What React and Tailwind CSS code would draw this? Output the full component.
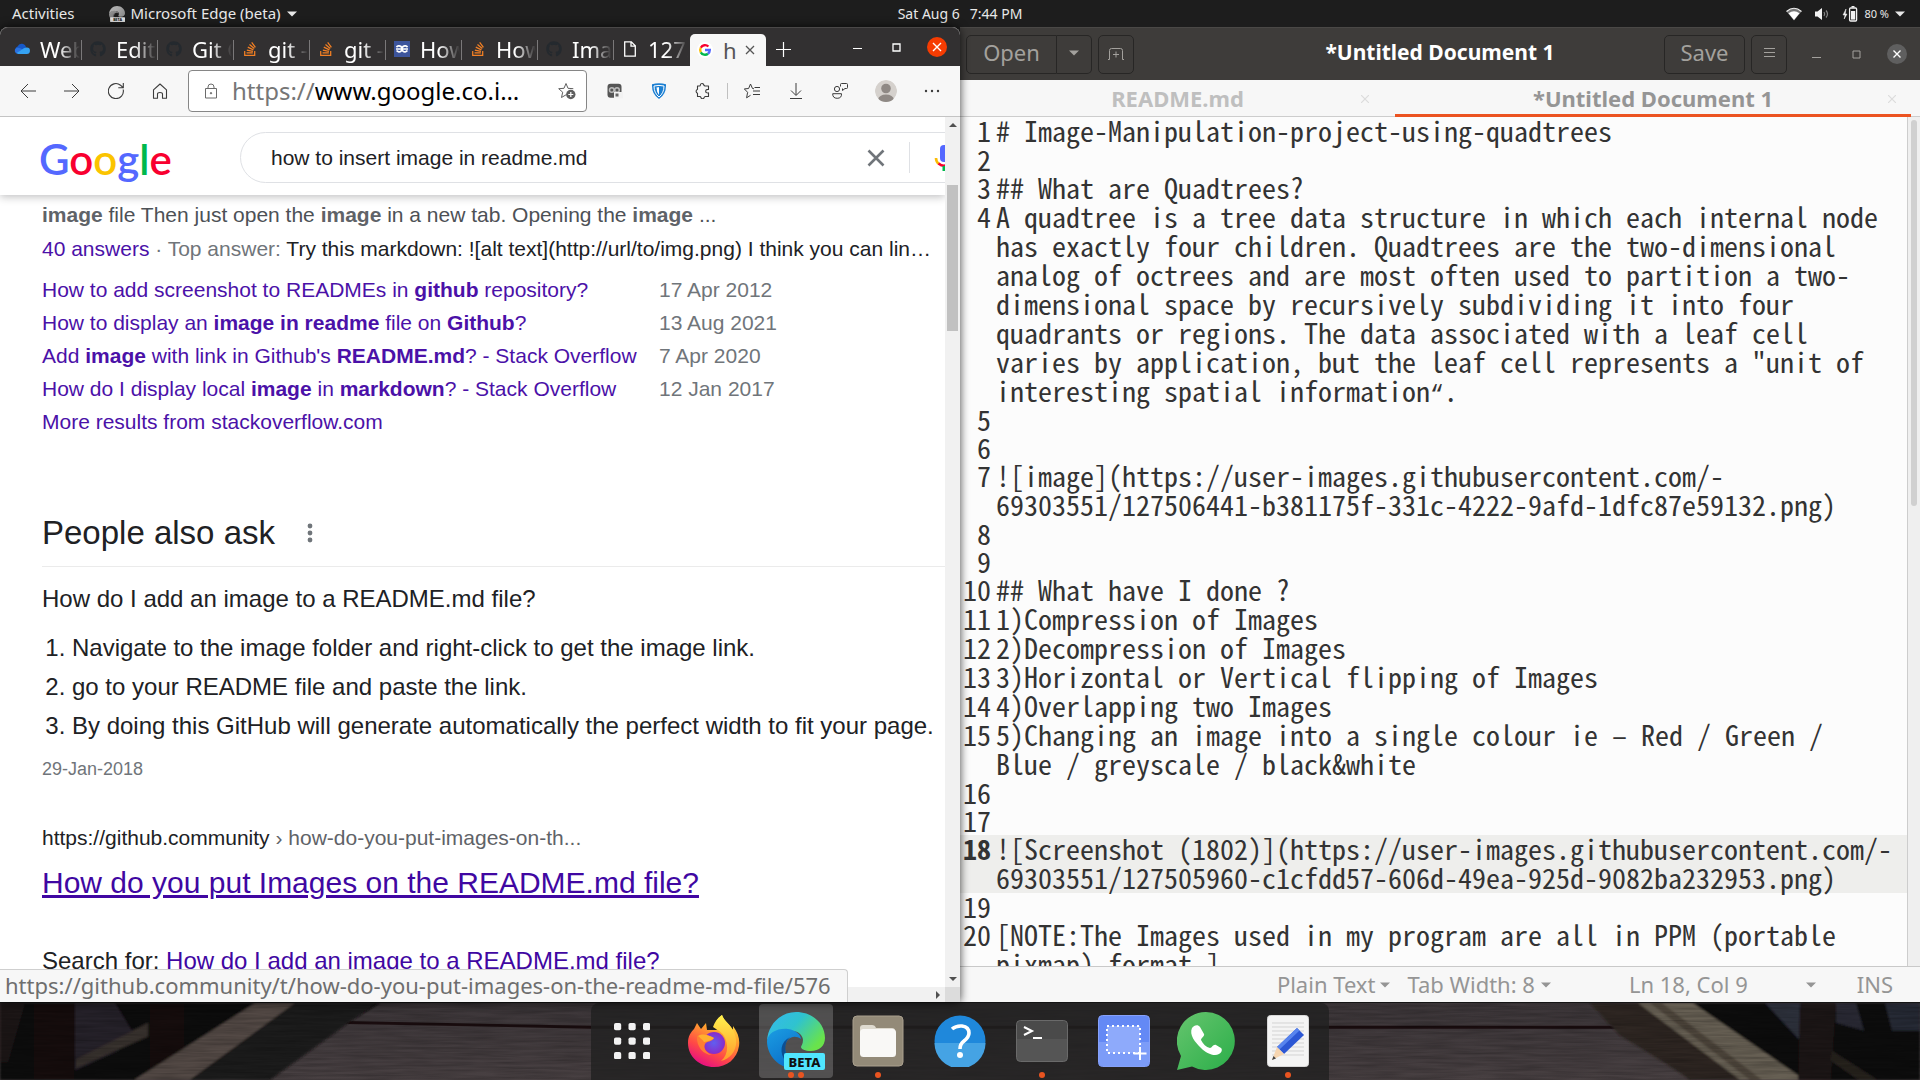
import React from "react";
import { FaGithub, FaStackOverflow } from "react-icons/fa";

const UI = "font-['Noto_Sans',sans-serif]";

/* ---------- small shared drawings ---------- */

function Caret({ className = "" }) {
  return (
    <svg viewBox="0 0 10 6" className={`w-[10px] h-[6px] shrink-0 ${className}`} fill="currentColor" aria-hidden="true">
      <path d="M0 .5h10L5 5.5z" />
    </svg>
  );
}

function Line({ children, size = "size-4", sw = 1, className = "", box = 16 }) {
  return (
    <svg viewBox={`0 0 ${box} ${box}`} className={`${size} shrink-0 ${className}`} fill="none" stroke="currentColor" strokeWidth={sw} aria-hidden="true">
      {children}
    </svg>
  );
}

function GoogleG({ className = "" }) {
  return (
    <svg viewBox="0 0 16 16" className={className} aria-hidden="true">
      <circle cx="8" cy="8" r="8" fill="#fff" />
      <g fill="none" strokeWidth="2.4">
        <path d="M11.4 4.5A4.8 4.8 0 0 0 3.8 5.7" stroke="#f8002f" />
        <path d="M3.8 5.7a4.8 4.8 0 0 0 0 4.6" stroke="#fbbc05" />
        <path d="M3.8 10.3a4.8 4.8 0 0 0 7.2 1.4" stroke="#00b84c" />
        <path d="M11 11.7A4.8 4.8 0 0 0 12.8 8H8" stroke="#5468ff" />
      </g>
    </svg>
  );
}

function Cloud() {
  return (
    <svg viewBox="0 0 16 16" className="size-4 shrink-0" aria-hidden="true">
      <path d="M3 11a3 3 0 0 1 .6-5.6A4.4 4.4 0 0 1 12 6.6L6 11z" fill="#1658c8" />
      <path d="M4 13a3.2 3.2 0 0 1-1.6-6c2-.8 4 .1 6 1.400l4 4.600z" fill="#2a72e0" />
      <path d="M4 13h8.600a3.200 3.200 0 0 0 .3-6.400C10 6 8 9.500 3 11.500z" fill="#35a2f2" />
    </svg>
  );
}

function Gfg() {
  return (
    <svg viewBox="0 0 16 16" className="size-4 shrink-0" aria-hidden="true">
      <rect width="16" height="16" fill="#3d559c" />
      <g fill="none" stroke="#fff" strokeWidth="1.700">
        <path d="M2.500 6.200A3 3 0 1 1 2.600 9.600M2 8h5.500" />
        <path d="M13.500 6.200A3 3 0 1 0 13.400 9.600M14 8H8.500" />
      </g>
    </svg>
  );
}

function Page() {
  return (
    <Line sw={1.300} className="text-white">
      <path d="M2.700 .8h6.600l4 4v10.400H2.700zM9 .8v4.400h4.300" />
    </Line>
  );
}

function EdgeMark({ gray = false, className = "" }) {
  const id = gray ? "eg" : "ec";
  return (
    <svg viewBox="0 0 58 58" className={className} aria-hidden="true">
      <defs>
        <linearGradient id={`${id}a`} x1="0" y1="0" x2="1" y2=".6">
          <stop offset="0" stopColor={gray ? "#b5b5b5" : "#35b9ee"} />
          <stop offset=".5" stopColor={gray ? "#aaa" : "#2fc3cf"} />
          <stop offset="1" stopColor={gray ? "#8e8e8e" : "#69e34b"} />
        </linearGradient>
        <linearGradient id={`${id}b`} x1="0" y1="0" x2=".6" y2="1">
          <stop offset="0" stopColor={gray ? "#999" : "#1b9de2"} />
          <stop offset="1" stopColor={gray ? "#666" : "#0a6cc8"} />
        </linearGradient>
      </defs>
      <path d="M0 29C1 12 14 0 29 0c17 0 29 12 29 26 0 8-6 13-14 13-6 0-10-2-10-4 0-1 2-3 2-7 0-4-4-9-11-9C13 19 2 21 0 29z" fill={`url(#${id}a)`} />
      <path d="M0 29c1-8 10-13 21-12 8 1 13 6 13 10-8-6-17 1-16 10 1 10 10 18 21 18-4 2-8 3-12 2C12 56 0 44 0 29z" fill={`url(#${id}b)`} />
      <path d="M23 25c-5 4-6 12-3 19 3 6 8 11 17 12-7 1-14-1-18-6-7-9-6-20 4-25z" fill={gray ? "#555" : "#0c4f93"} />
      <rect x={gray ? 4 : 17} y="41" width={gray ? 54 : 41} height="17" rx="2" fill={gray ? "#ddd" : "#50e6ff"} />
      <text x={gray ? 31 : 37.500} y="54.500" textAnchor="middle" fontFamily="Noto Sans" fontWeight="800" fontSize="13" fill="#111">BETA</text>
    </svg>
  );
}

/* ---------- top panel ---------- */

function TopPanel() {
  return (
    <header className={`h-[27px] shrink-0 bg-[#1d1d1d] text-[#e8e8e8] text-[15px] leading-[27px] grid grid-cols-[1fr_auto_1fr] ${UI}`}>
      <div className="flex items-center pl-3">
        <button>Activities</button>
        <button className="flex items-center gap-[6px] ml-[34px]">
          <EdgeMark gray className="size-4" />
          Microsoft Edge (beta)
          <Caret />
        </button>
      </div>
      <button className="flex gap-[10px] text-[14px]"><span>Sat Aug 6</span><span>7:44 PM</span></button>
      <button className="flex items-center justify-end pr-[15px]" aria-label="System menu">
        <svg viewBox="0 0 16 14" className="w-4 h-[14px]" aria-hidden="true">
          <path d="M.5 4.500Q8-2 15.500 4.500L8 13.500z" fill="#777" />
          <path d="M.5 4.500Q8-2 15.500 4.500" fill="none" stroke="#f2f2f2" strokeWidth="1.200" />
          <path d="M2.500 6.300Q8 2 13.500 6.300L8 13z" fill="#fff" />
        </svg>
        <svg viewBox="0 0 16 14" className="w-4 h-[14px] ml-3" aria-hidden="true">
          <path d="M1 4.500h2.500L8 1v12L3.500 9.500H1z" fill="#f2f2f2" />
          <path d="M10 5q1.500 2 0 4M12 3.500q3 3.500 0 7" fill="none" stroke="#888" strokeWidth="1.200" />
        </svg>
        <svg viewBox="0 0 16 16" className="size-4 ml-3" aria-hidden="true">
          <path d="M4 3 1 9h2l-.8 4L5 8H3.200z" fill="#f2f2f2" stroke="#f2f2f2" strokeWidth=".5" />
          <path d="M9.500 0h3v1.500h-3z" fill="#f2f2f2" />
          <rect x="7.600" y="2" width="7" height="13" rx="1" fill="none" stroke="#f2f2f2" strokeWidth="1.300" />
          <rect x="9" y="5" width="4.200" height="8.600" fill="#f2f2f2" />
        </svg>
        <span className="text-[11px] ml-[6px] mr-[6px]">80 %</span>
        <Caret />
      </button>
    </header>
  );
}

/* ---------- browser window ---------- */

const gh = <FaGithub className="size-4 shrink-0 text-[#24292e]" />;
const so = <FaStackOverflow className="size-4 shrink-0 text-[#f48024]" />;

const TABS = [
  { icon: <Cloud />, label: "Web" },
  { icon: gh, label: "Editi" },
  { icon: gh, label: "Git C" },
  { icon: so, label: "git - " },
  { icon: so, label: "git - " },
  { icon: <Gfg />, label: "How" },
  { icon: so, label: "How" },
  { icon: gh, label: "Imag" },
  { icon: <Page />, label: "127." },
];

function BrowserTabs() {
  return (
    <div className={`flex h-[39px] shrink-0 bg-[#323031] border-t border-[#4a4848] rounded-t-[8px] text-white text-[22px] ${UI}`}>
      <div className="flex pl-[6px] min-w-0" role="tablist">
        {TABS.map((t, i) => (
          <button key={i} role="tab" aria-selected="false" className="flex items-center w-[76px] pl-2 gap-[10px] overflow-hidden relative pt-1">
            {t.icon}
            <span className="flex-1 min-w-0 text-left overflow-hidden whitespace-pre leading-[30px] [mask-image:linear-gradient(to_right,#000_45%,transparent_95%)]">{t.label}</span>
            {i < 8 && <span className="w-px h-5 bg-[#7a7879] absolute right-0 top-[12px]" />}
          </button>
        ))}
        <div role="tab" aria-selected="true" className="flex items-center w-[76px] mt-[6px] pl-[7px] bg-[#f7f7f7] text-[#555] rounded-t-[5px]">
          <GoogleG className="size-4 shrink-0" />
          <span className="ml-[10px] w-[14px] overflow-hidden leading-[30px]">h</span>
          <button aria-label="Close tab" className="ml-2">
            <Line size="size-[10px]" box={10} sw={1.300}><path d="M1 1l8 8M9 1l-8 8" /></Line>
          </button>
        </div>
      </div>
      <button aria-label="New tab" className="ml-[10px] mt-1">
        <Line size="size-[15px]" box={15} sw={1.200}><path d="M7.500 0v15M0 7.500h15" /></Line>
      </button>
      <div className="ml-auto flex items-center gap-[30px] pr-[13px]">
        <button aria-label="Minimise"><Line size="size-[9px]" box={9}><path d="M0 5.500h9" /></Line></button>
        <button aria-label="Maximise"><Line size="size-[9px]" box={9} sw={2}><path d="M1 1h7v7H1z" strokeWidth="1.300" /></Line></button>
        <button aria-label="Close" className="-ml-[4px] size-5 rounded-full bg-[#f63c02] flex items-center justify-center">
          <Line size="size-[10px]" box={10} sw={1.400}><path d="M1 1l8 8M9 1l-8 8" /></Line>
        </button>
      </div>
    </div>
  );
}

function ToolButton({ label, children }) {
  return (
    <button aria-label={label} className="w-11 h-9 flex items-center justify-center shrink-0 text-[#3c3c3c]">
      {children}
    </button>
  );
}

function BrowserToolbar() {
  return (
    <div className={`flex items-center h-[51px] shrink-0 bg-[#f7f7f7] border-b border-[#c4c4c4] pl-[6px] pr-[6px] ${UI}`}>
      <ToolButton label="Back"><Line><path d="M16 8H1M8 1L1 8l7 7" /></Line></ToolButton>
      <ToolButton label="Forward"><Line><path d="M0 8h15M8 1l7 7-7 7" /></Line></ToolButton>
      <ToolButton label="Refresh"><Line sw={1.100}><path d="M15.200 6.500A7.500 7.500 0 1 1 12.500 2.200l2.500 2.300M15.300 0v4.800h-5" /></Line></ToolButton>
      <ToolButton label="Home"><Line sw={1.100}><path d="M1.500 6.800L8 1l6.500 5.800v8.500h-4V11q0-1.500-2.500-1.500T5.500 11v4.300h-4z" strokeLinejoin="round" /></Line></ToolButton>
      <div className="flex items-center flex-1 min-w-0 h-[42px] ml-[6px] mr-[6px] pl-[14px] pr-[10px] bg-white border border-[#868686] rounded-[4px] text-[24px]">
        <Line className="text-[#6b6b6b]"><path d="M2.500 5.500h11v9.500h-11zM5 5.500V4a3 3 0 0 1 6 0v1.500" strokeLinejoin="round" /><circle cx="8" cy="10.200" r=".7" fill="currentColor" /></Line>
        <label htmlFor="address" className="ml-[13px] text-[#767676]">https://</label>
        <input id="address" className="flex-1 min-w-0 bg-transparent text-black outline-none" defaultValue="www.google.co.i…" />
        <button aria-label="Add to favourites" className="text-[#5f5f5f]">
          <svg viewBox="0 0 18 18" className="size-[18px]" aria-hidden="true">
            <path d="M8 1.500l2 4.800 5.300.4M8 1.500L6 6.300l-5.300.4 4 3.500-1.200 5.300L8 12.800" fill="none" stroke="currentColor" />
            <circle cx="12.800" cy="12.500" r="4.700" fill="currentColor" />
            <path d="M12.800 10v5M10.300 12.500h5" stroke="#fff" strokeWidth="1.200" />
          </svg>
        </button>
      </div>
      <ToolButton label="Video extension">
        <svg viewBox="0 0 16 16" className="size-4" aria-hidden="true">
          <rect x=".5" y=".8" width="14" height="14" rx="3" fill="#555" />
          <circle cx="4.800" cy="7" r="2.300" fill="none" stroke="#bbb" strokeWidth="1.500" />
          <circle cx="10" cy="7" r="2.300" fill="none" stroke="#bbb" strokeWidth="1.500" />
          <path d="M7 9h9v6.500H7z" fill="#f2f2f2" />
          <path d="M8.500 10.500h3v3h-3z" fill="#666" />
        </svg>
      </ToolButton>
      <ToolButton label="Shield extension">
        <svg viewBox="0 0 16 16" className="size-4" aria-hidden="true">
          <path d="M1 1.200Q8-.5 15 1.200 15.500 11 8 16 .5 11 1 1.200z" fill="#1c7fd2" />
          <path d="M3 3q5-1.200 10 0 0 7-5 11-5-4-5-11z" fill="none" stroke="#fff" strokeWidth="1" />
          <path d="M5.500 4.500Q8 4 8 4v8Q5.500 9 5.500 4.500z" fill="#fff" />
        </svg>
      </ToolButton>
      <ToolButton label="Extensions"><Line sw={1.100}><path d="M5.300 2.500a1.800 1.800 0 0 1 3.600-.3q.3.800 1.200.8h3.400v3.400q-2.800-.2-2.800 1.800t2.800 1.700v3.600h-3.200q-.9.100-1.100.9a1.700 1.700 0 0 1-3.300 0q-.2-.9-1.100-.9H2.500v-3.200A2.100 2.100 0 0 1 2.200 6.500l.3-.2V3h1.800q1 0 1-.5z" strokeLinejoin="round" /></Line></ToolButton>
      <span className="w-px h-4 bg-[#c0c0c0] mx-[2px]" />
      <ToolButton label="Favourites"><Line><path d="M10 5.800L8.500 5.500 6.500 1 4.600 5.500l-4.300.4 3.300 3.400-1 5.500 3.900-2.500M10.500 4.500H16M9 8h7M9 11.500h7" /></Line></ToolButton>
      <ToolButton label="Downloads"><Line><path d="M8 0v12M3 7.500l5 5 5-5M2 15.500h12" /></Line></ToolButton>
      <ToolButton label="Feedback"><Line><path d="M8.500 3.500v-2Q8.500.5 9.500.5h5q1 0 1 1v3q0 1-1 1h-1.500l-2.500 2V5.500" /><circle cx="5" cy="6" r="2.600" /><path d="M.7 10.700h8.800q.3 4.600-4.300 4.600T.7 10.700z" /></Line></ToolButton>
      <button aria-label="Profile" className="w-12 flex justify-center shrink-0">
        <svg viewBox="0 0 22 22" className="size-[22px] rounded-full" aria-hidden="true">
          <circle cx="11" cy="11" r="11" fill="#d5d1cd" />
          <circle cx="11" cy="8.500" r="4.800" fill="#8f8985" />
          <ellipse cx="11" cy="19.500" rx="7.800" ry="5" fill="#8f8985" />
        </svg>
      </button>
      <ToolButton label="Settings"><Line><g fill="currentColor" stroke="none"><circle cx="2" cy="8" r="1.200" /><circle cx="8" cy="8" r="1.200" /><circle cx="14" cy="8" r="1.200" /></g></Line></ToolButton>
    </div>
  );
}

const LINKS = [
  { text: <>How to add screenshot to READMEs in <b>github</b> repository?</>, date: "17 Apr 2012" },
  { text: <>How to display an <b>image in readme</b> file on <b>Github</b>?</>, date: "13 Aug 2021" },
  { text: <>Add <b>image</b> with link in Github's <b>README.md</b>? - Stack Overflow</>, date: "7 Apr 2020" },
  { text: <>How do I display local <b>image</b> in <b>markdown</b>? - Stack Overflow</>, date: "12 Jan 2017" },
];

function SearchHeader() {
  return (
    <div className="flex h-[78px] shrink-0 bg-white relative z-10 shadow-[0_2px_8px_rgba(32,33,36,0.28)] pt-[15px]">
      <a href="#home" aria-label="Google" className="w-[200px] ml-[39px] shrink-0 font-['Lato',sans-serif] font-semibold text-[42px] leading-[54px] text-[#5468ff]">
        G<span className="text-[#f8002f]">o</span><span className="text-[#fbc400]">o</span>g<span className="text-[#00b84c]">l</span><span className="text-[#f8002f]">e</span>
      </a>
      <form className="flex items-center w-[900px] shrink-0 h-[51px] border border-[#dfe1e5] rounded-full pl-[30px] ml-px">
        <input aria-label="Search" className="w-[596px] text-[21px] text-[#202124] outline-none" defaultValue="how to insert image in readme.md" />
        <button type="button" aria-label="Clear" className="text-[#70757a]">
          <Line size="size-[18px]" box={18} sw={2.600}><path d="M1.500 1.500l15 15M16.500 1.500l-15 15" /></Line>
        </button>
        <span className="w-px h-[31px] bg-[#dfe1e5] ml-6" />
        <button type="button" aria-label="Search by voice" className="ml-6">
          <svg viewBox="0 0 20 26" className="w-5 h-[26px]" aria-hidden="true">
            <rect x="6" y="0" width="8" height="17" rx="4" fill="#5468ff" />
            <path d="M2 13q0 4 3 6" fill="none" stroke="#fbbc05" strokeWidth="2.600" />
            <path d="M4.500 18.500q5.500 4.500 11 0" fill="none" stroke="#f8002f" strokeWidth="2.600" />
            <path d="M10 21v5" stroke="#00b84c" strokeWidth="3" />
          </svg>
        </button>
      </form>
    </div>
  );
}

function SearchPage() {
  return (
    <div className="flex-1 min-w-0 flex flex-col overflow-hidden bg-white text-[#202124] font-['Liberation_Sans',Arial,sans-serif]">
      <SearchHeader />
      <main className="flex-1 min-h-0 overflow-hidden pl-[42px] text-[21px] leading-[33px] whitespace-nowrap">
        <p className="pt-[3px] text-[#4d5156]"><b className="text-[#5f6368]">image</b> file Then just open the <b className="text-[#5f6368]">image</b> in a new tab. Opening the <b className="text-[#5f6368]">image</b> ...</p>
        <p className="pt-px mr-3 overflow-hidden text-ellipsis">
          <a href="#answers" className="text-[#4b11a8]">40 answers</a>
          <span className="text-[#70757a]"> · Top answer: </span>
          Try this markdown: ![alt text](http://url/to/img.png) I think you can link to it
        </p>
        <table className="mt-2 text-left">
          <tbody>
            {LINKS.map((l) => (
              <tr key={l.date}>
                <td className="p-0 w-[617px]"><a href="#result" className="text-[#4b11a8]">{l.text}</a></td>
                <td className="p-0 text-[#70757a]">{l.date}</td>
              </tr>
            ))}
          </tbody>
        </table>
        <a href="#more" className="block text-[#4b11a8]">More results from stackoverflow.com</a>
        <div className="flex items-center mt-[71px] pb-[9px] border-b border-[#ebebeb]">
          <h2 className="text-[33px] leading-[48px]">People also ask</h2>
          <button aria-label="About this result" className="ml-8 text-[#70757a]">
            <svg viewBox="0 0 6 20" className="w-[6px] h-5" fill="currentColor" aria-hidden="true"><circle cx="3" cy="3" r="2.400" /><circle cx="3" cy="10" r="2.400" /><circle cx="3" cy="17" r="2.400" /></svg>
          </button>
        </div>
        <h3 className="text-[24px] mt-[15px] leading-[33px]">How do I add an image to a README.md file?</h3>
        <ol className="mt-[13px] text-[24px] leading-[39px] list-decimal pl-[30px]">
          <li>Navigate to the image folder and right-click to get the image link.</li>
          <li>go to your README file and paste the link.</li>
          <li>By doing this GitHub will generate automatically the perfect width to fit your page.</li>
        </ol>
        <p className="text-[18px] text-[#70757a] mt-2">29-Jan-2018</p>
        <p className="mt-[35px]">https://github.community<span className="text-[#5f6368]"> › how-do-you-put-images-on-th...</span></p>
        <h3 className="mt-[9px] text-[30px] leading-[39px]"><a href="#github" className="text-[#4007a2] underline">How do you put Images on the README.md file?</a></h3>
        <p className="mt-[42px] text-[24px]">Search for: <a href="#search" className="text-[#4007a2]">How do I add an image to a README.md file?</a></p>
      </main>
    </div>
  );
}

function Arrow({ d }) {
  return <svg viewBox="0 0 8 8" className="size-2" fill="#505050" aria-hidden="true"><path d={d} /></svg>;
}

function Browser() {
  return (
    <section className="flex flex-col min-w-0 min-h-0 relative z-10 shadow-[0_0_10px_rgba(0,0,0,0.75)] bg-white rounded-t-[8px]">
      <BrowserTabs />
      <BrowserToolbar />
      <div className="flex-1 min-h-0 flex relative">
        <div className="flex-1 min-w-0 flex flex-col">
          <div className="flex-1 min-h-0 flex"><SearchPage /></div>
          <div className="h-[15px] shrink-0 bg-[#f1f1f1] flex items-center justify-end pr-[3px]"><Arrow d="M2 0l4 4-4 4z" /></div>
        </div>
        <div className="w-[15px] shrink-0 bg-[#f1f1f1] flex flex-col items-center">
          <div className="h-[68px] pt-[4px]"><Arrow d="M0 6l4-4 4 4z" /></div>
          <div className="w-[11px] h-[146px] bg-[#c1c1c1]" />
          <div className="mt-auto pb-1"><Arrow d="M0 2l4 4 4-4z" /></div>
          <div className="h-[15px] w-full bg-[#dcdcdc]" />
        </div>
        <div className={`absolute left-0 bottom-0 z-20 h-[33px] pl-[5px] pr-4 bg-[#f7f7f7] border-t border-r border-[#cfcfcf] rounded-tr-[4px] text-[22px] leading-[31px] text-[#6e6e6e] ${UI}`}>
          https://github.community/t/how-do-you-put-images-on-the-readme-md-file/576
        </div>
      </div>
    </section>
  );
}

/* ---------- editor window ---------- */

const DOC = [
  ["# Image-Manipulation-project-using-quadtrees"],
  [],
  ["## What are Quadtrees?"],
  [
    "A quadtree is a tree data structure in which each internal node",
    "has exactly four children. Quadtrees are the two-dimensional",
    "analog of octrees and are most often used to partition a two-",
    "dimensional space by recursively subdividing it into four",
    "quadrants or regions. The data associated with a leaf cell",
    "varies by application, but the leaf cell represents a \"unit of",
    "interesting spatial information“.",
  ],
  [],
  [],
  ["![image](https://user-images.githubusercontent.com/-", "69303551/127506441-b381175f-331c-4222-9afd-1dfc87e59132.png)"],
  [],
  [],
  ["## What have I done ?"],
  ["1)Compression of Images"],
  ["2)Decompression of Images"],
  ["3)Horizontal or Vertical flipping of Images"],
  ["4)Overlapping two Images"],
  ["5)Changing an image into a single colour ie – Red / Green /", "Blue / greyscale / black&white"],
  [],
  [],
  ["![Screenshot (1802)](https://user-images.githubusercontent.com/-", "69303551/127505960-c1cfdd57-606d-49ea-925d-9082ba232953.png)"],
  [],
  ["[NOTE:The Images used in my program are all in PPM (portable", "pixmap) format ]"],
];

/* The editor face draws “ as a full-width glyph, so it is set in a half-width face. */
function DocRow({ text }) {
  const [before, after] = text.split("“");
  return (
    <div className="h-[29px]">
      {before}
      {after !== undefined && <span className="text-[23px] font-['Liberation_Mono',monospace]">“</span>}
      {after}
    </div>
  );
}

function EditorHeader() {
  const btn = "h-[39px] pb-[3px] border border-[#272625] rounded-[5px] flex items-center justify-center text-[#a3a19d]";
  return (
    <div className={`h-[53px] shrink-0 bg-[#3e3c3a] border-t border-[#4a4846] grid grid-cols-[1fr_auto_1fr] items-center text-[22px] ${UI}`}>
      <div className="flex pl-[6px] gap-[6px]">
        <div className="flex">
          <button className={`${btn} rounded-r-none w-[91px]`}>Open</button>
          <button aria-label="Recent files" className={`${btn} rounded-l-none border-l-0 w-[35px]`}><Caret /></button>
        </div>
        <button aria-label="New document" className={`${btn} w-[36px]`}>
          <Line><path d="M0 14.500h1.500V5.500q0-2 2-2h9q2 0 2 2v9H16M8 6.500v6M5 9.500h6" /></Line>
        </button>
      </div>
      <h1 className="font-bold text-white text-[21px] pb-[3px]">*Untitled Document 1</h1>
      <div className="flex items-center justify-end pr-[13px]">
        <button className={`${btn} w-[81px]`}>Save</button>
        <button aria-label="Menu" className={`${btn} w-[36px] ml-[6px]`}>
          <Line size="size-[11px]" box={11}><path d="M0 1.500h11M0 5.500h11M0 9.500h11" /></Line>
        </button>
        <button aria-label="Minimise" className="text-[#a3a19d] ml-[25px]"><Line size="size-[9px]" box={9}><path d="M0 7.500h9" /></Line></button>
        <button aria-label="Maximise" className="text-[#a3a19d] ml-[31px]"><Line size="size-[9px]" box={9}><path d="M1 1h7v7H1z" /></Line></button>
        <button aria-label="Close" className="size-5 ml-[26px] rounded-full bg-[#5f5f5f] text-white flex items-center justify-center"><Line size="size-[8px]" box={8} sw={1.400}><path d="M.5.5l7 7M7.500.5l-7 7" /></Line></button>
      </div>
    </div>
  );
}

function DocTab({ label, active, className, closeClass }) {
  return (
    <div role="tab" aria-selected={active} className={`relative flex items-center justify-center ${active ? "pt-[3px] text-[#959595] border-b-[3px] border-[#ec5321]" : "pt-px text-[#bfbfbf] border-b border-[#cdcdcd]"} ${className}`}>
      {label}
      <button aria-label={`Close ${label}`} className={`absolute text-[#dcdcdc] ${closeClass}`}>
        <Line size="size-[8px]" box={8} sw={1.200}><path d="M0 0l8 8M8 0L0 8" /></Line>
      </button>
    </div>
  );
}

function Editor() {
  return (
    <section className="flex flex-col min-w-0 min-h-0 bg-[#f7f7f7]">
      <EditorHeader />
      <div role="tablist" className={`flex h-[37px] shrink-0 font-bold text-[22px] ${UI}`}>
        <DocTab label="README.md" active={false} className="flex-[435]" closeClass="right-[26px]" />
        <DocTab label="*Untitled Document 1" active className="flex-[516]" closeClass="right-[15px]" />
        <div className="w-[9px] border-b border-[#cdcdcd]" />
      </div>
      <div className="flex-1 min-h-0 flex border-b border-[#c9c9c9]">
        <ol aria-label="Document text" className="flex-1 min-w-0 overflow-hidden bg-[#fcfcfc] text-[#333] font-['Noto_Sans_Mono_CJK_SC','DejaVu_Sans_Mono',monospace] text-[28px] leading-[27px] whitespace-pre">
          {DOC.map((rows, i) => (
            <li key={i} className={`flex ${i === 17 ? "bg-[#eeeeec]" : ""} ${rows.length ? "" : "h-7"}`}>
              <span className={`w-[31px] mr-[5px] shrink-0 flex justify-end ${i === 17 ? "font-bold" : ""}`}>{i + 1}</span>
              <div className="min-w-0">{rows.map((r) => <DocRow key={r} text={r} />)}</div>
            </li>
          ))}
        </ol>
        <div className="w-[13px] shrink-0 bg-[#efefef] border-l border-[#cdcdcd] pt-[3px] pl-[3px]">
          <div className="w-[6px] h-[386px] rounded-full bg-[#d0d0d0]" />
        </div>
      </div>
      <footer className={`h-[35px] shrink-0 flex items-center justify-end pr-[27px] text-[22px] text-[#959595] ${UI}`}>
        <button className="flex items-center gap-[5px]">Plain Text <Caret /></button>
        <button className="flex items-center gap-[6px] ml-[17px]">Tab Width: 8 <Caret /></button>
        <span className="ml-[78px]">Ln 18, Col 9</span>
        <button aria-label="Go to line" className="ml-[58px]"><Caret /></button>
        <span className="ml-[41px]">INS</span>
      </footer>
    </section>
  );
}

/* ---------- desktop wallpaper strip and dock ---------- */

function Wallpaper() {
  return (
    <svg viewBox="0 0 1920 78" preserveAspectRatio="none" className="absolute inset-0 w-full h-full" aria-hidden="true">
      <defs>
        <filter id="grain" x="0" y="0" width="100%" height="100%">
          <feTurbulence type="fractalNoise" baseFrequency="0.02 0.4" numOctaves="3" seed="4" />
          <feColorMatrix values="0 0 0 0 0  0 0 0 0 0  0 0 0 0 0  .9 0 0 0 -.25" />
        </filter>
        <filter id="soft"><feGaussianBlur stdDeviation="1.200" /></filter>
        <linearGradient id="deck" x1="0" y1="0" x2="0" y2="1"><stop offset="0" stopColor="#3c3639" /><stop offset="1" stopColor="#484042" /></linearGradient>
      </defs>
      <rect width="1920" height="78" fill="url(#deck)" />
      <path d="M330 18l261 5h1040v3H591l-255-5z" fill="#1a0d0f" />
      <g filter="url(#soft)">
        <path d="M0 0h380L255 78H0z" fill="#0e0c0e" />
        <path d="M75 0h40l18 30-15 18-43 20z" fill="#28242c" />
        <path d="M0 0h25L8 60H0z" fill="#1b1718" />
        <path d="M34 0h40v78H34z" fill="#16110f" />
        <path d="M76 57l72-37v14L76 66z" fill="#39322e" />
        <path d="M150 0h34v55l-34 18z" fill="#120d0a" />
        <path d="M255 0h40L190 78h-56z" fill="#524a45" />
        <path d="M296 0h80L270 78h-78z" fill="#1e1a1b" />
        <path d="M1590 0h330v78h-230q-40-35-60-50z" fill="#0b090b" />
        <path d="M1590 0h50l105 78h-55q-20-15-70-45z" fill="#2d2621" />
        <path d="M1638 0h55l112 78h-65z" fill="#665f52" />
        <path d="M1650 0h12l100 78h-12z" fill="#4e453b" />
        <path d="M1765 0h35v38z" fill="#2e303c" />
        <path d="M1800 0h36l-5 78h-33z" fill="#1d1513" />
        <path d="M1836 0h20l8 28-28-8z" fill="#292b36" />
        <path d="M1885 0h35v28h-28z" fill="#272934" />
        <path d="M1832 48l46 30h-20l-28-20z" fill="#26211f" />
      </g>
      <rect width="1920" height="78" filter="url(#grain)" opacity=".4" />
    </svg>
  );
}

function AppsIcon() {
  return (
    <svg viewBox="0 0 36 36" className="size-9" fill="#f2f2f2" aria-hidden="true">
      {[0, 14.500, 29].map((x) => [0, 14.500, 29].map((y) => <rect key={`${x}-${y}`} x={x} y={y} width="7.200" height="7.200" rx="1.800" />))}
    </svg>
  );
}

function FirefoxIcon() {
  return (
    <svg viewBox="0 0 52 52" className="size-[52px]" aria-hidden="true">
      <defs>
        <linearGradient id="ffa" x1=".8" y1="0" x2=".3" y2="1"><stop offset="0" stopColor="#fff04d" /><stop offset=".35" stopColor="#ffa22e" /><stop offset=".7" stopColor="#ff4a45" /><stop offset="1" stopColor="#e50c86" /></linearGradient>
        <radialGradient id="ffb"><stop offset="0" stopColor="#5f5ff0" /><stop offset="1" stopColor="#8a2bc9" /></radialGradient>
        <linearGradient id="ffc" x1="0" y1="0" x2="0" y2="1"><stop offset="0" stopColor="#fff14d" /><stop offset="1" stopColor="#ff9a2b" /></linearGradient>
      </defs>
      <path d="M6 14l3-6 4 6 5-6 1 7h10C26 10 28 4 34 0c2 6 7 8 11 15l0-4c5 7 7 13 6 20C49 44 39 52 26 52 12 52 0 42 0 28 0 21 3 17 6 14z" fill="url(#ffa)" />
      <path d="M25 12c2-6 5-9 9-12 2 6 8 9 12 17 6 14-1 26-13 29 7-6 8-16 3-25-3-5-7-6-11-9z" fill="url(#ffc)" />
      <circle cx="26" cy="28" r="11" fill="url(#ffb)" />
      <path d="M9 21c6-2 11-1 17 2-2 4-7 3-9 6-2 5 2 9 7 11-8 0-16-8-15-19z" fill="#ff7d33" />
      <path d="M10 21c5-3 10-1 16 2-3 3-6 3-10 4-2-3-4-4-6-6z" fill="#ffb02e" />
    </svg>
  );
}

function FilesIcon() {
  return (
    <svg viewBox="0 0 52 52" className="size-[52px]" aria-hidden="true">
      <rect x="1" y="1" width="50" height="50" rx="4" fill="#938a78" stroke="#aaa08e" />
      <path d="M8 13q0-3 3-3h9q3 0 4 3h16q3 0 3 3v10H8z" fill="#dedacf" />
      <rect x="8" y="14" width="36" height="28" rx="3.500" fill="#f9f8f6" />
      <path d="M8 20q0-3 3-3h9q4 0 5-3h10v8H8z" fill="#f9f8f6" />
    </svg>
  );
}

function HelpIcon() {
  return (
    <svg viewBox="0 0 52 52" className="size-[52px]" aria-hidden="true">
      <circle cx="26" cy="26" r="25.500" fill="#1f88db" />
      <path d="M.5 28h51A25.500 25.500 0 0 1 .5 28z" fill="#45a3e4" />
      <path d="M18 14q4-3.500 10-3 7 1 7 7 0 4-5 8-4 3-4 8" fill="none" stroke="#fff" strokeWidth="3.600" />
      <circle cx="26" cy="40" r="3" fill="#fff" />
    </svg>
  );
}

function TerminalIcon() {
  return (
    <svg viewBox="0 0 52 42" className="w-[52px] h-[42px]" aria-hidden="true">
      <rect x=".5" y=".5" width="51" height="41" rx="4" fill="#555" stroke="#6a6a6a" />
      <path d="M1 19V5q0-4 4-4h42q4 0 4 4v14z" fill="#4a4a4a" />
      <path d="M8 7l8 4-8 4M17 18h9" fill="none" stroke="#fff" strokeWidth="2" />
    </svg>
  );
}

function CaptureIcon() {
  return (
    <svg viewBox="0 0 52 52" className="size-[52px]" aria-hidden="true">
      <rect x=".5" y=".5" width="51" height="51" rx="4" fill="#6489f5" stroke="#86a1fa" />
      <path d="M1 27h50v20q0 4-4 4H5q-4 0-4-4z" fill="#7c9cf8" />
      <rect x="9" y="11" width="33" height="27" fill="#8eaafb" stroke="#fff" strokeWidth="2" strokeDasharray="2 3" />
      <path d="M42 32v13M35.500 38.500h13" stroke="#fff" strokeWidth="2" />
    </svg>
  );
}

function WhatsAppIcon() {
  return (
    <svg viewBox="0 0 58 58" className="size-[58px]" aria-hidden="true">
      <defs><linearGradient id="wa" x1="0" y1="0" x2="1" y2="1"><stop offset="0" stopColor="#66c56e" /><stop offset="1" stopColor="#2bae49" /></linearGradient></defs>
      <path d="M29 0a29 29 0 1 1-14 54.500L0 58l4-14A29 29 0 0 1 29 0z" fill="url(#wa)" />
      <path d="M15 16c2-3 6-4 8-1l4 7c1 2-3 4-3 6 2 4 5 7 9 8 2 0 3-4 6-3l5 3c2 2 0 5-2 6-5 3-13-1-18-6-6-6-12-13-9-20z" fill="#fff" />
    </svg>
  );
}

function GeditIcon() {
  return (
    <svg viewBox="0 0 42 52" className="w-[42px] h-[52px]" aria-hidden="true">
      <rect x=".5" y=".5" width="41" height="51" rx="3" fill="#f4f4f4" stroke="#d8d8d8" />
      <path d="M5 8h32M5 12h32M5 16h32M5 20h32M5 24h32M5 28h32M5 32h32M5 36h32M5 40h32" stroke="#d3d3d3" />
      <path d="M10 32L30 13l7 7-20 19z" fill="#2c57d4" />
      <path d="M10 32L30 13l2.500 2.500-20 19z" fill="#5884ee" />
      <path d="M10 32l7 7-12 6z" fill="#f6d5b0" />
      <path d="M6.500 41l2.500 2.500-4 1.500z" fill="#444" />
    </svg>
  );
}

const DOCK = [
  { name: "Show Applications", icon: <AppsIcon />, dots: 0 },
  { name: "Firefox", icon: <FirefoxIcon />, dots: 0 },
  { name: "Microsoft Edge (beta)", icon: <EdgeMark className="size-[58px]" />, dots: 2, active: true },
  { name: "Files", icon: <FilesIcon />, dots: 1 },
  { name: "Help", icon: <HelpIcon />, dots: 0 },
  { name: "Terminal", icon: <TerminalIcon />, dots: 1 },
  { name: "Screenshot", icon: <CaptureIcon />, dots: 0 },
  { name: "WhatsApp", icon: <WhatsAppIcon />, dots: 0 },
  { name: "Text Editor", icon: <GeditIcon />, dots: 1 },
];

function Dock() {
  return (
    <div className="relative h-[78px] shrink-0 flex justify-center border-t border-[#151515]">
      <Wallpaper />
      <nav aria-label="Dock" className="relative flex px-1 gap-2 pt-px bg-[#212121]/80 rounded-t-[8px]">
        {DOCK.map((d) => (
          <button key={d.name} aria-label={d.name} className={`relative w-[74px] h-[74px] rounded-[4px] flex items-center justify-center ${d.active ? "bg-white/20" : ""}`}>
            {d.icon}
            <span className="absolute bottom-0 inset-x-0 flex justify-center gap-1">
              {Array.from({ length: d.dots }, (_, i) => <i key={i} className="size-[6px] rounded-full bg-[#e95420]" />)}
            </span>
          </button>
        ))}
      </nav>
    </div>
  );
}

export default function App() {
  return (
    <div className="h-screen flex flex-col overflow-hidden bg-[#1d1d1d]">
      <TopPanel />
      <div className="flex-1 min-h-0 grid grid-cols-2 grid-rows-[minmax(0,1fr)]">
        <Browser />
        <Editor />
      </div>
      <Dock />
    </div>
  );
}
